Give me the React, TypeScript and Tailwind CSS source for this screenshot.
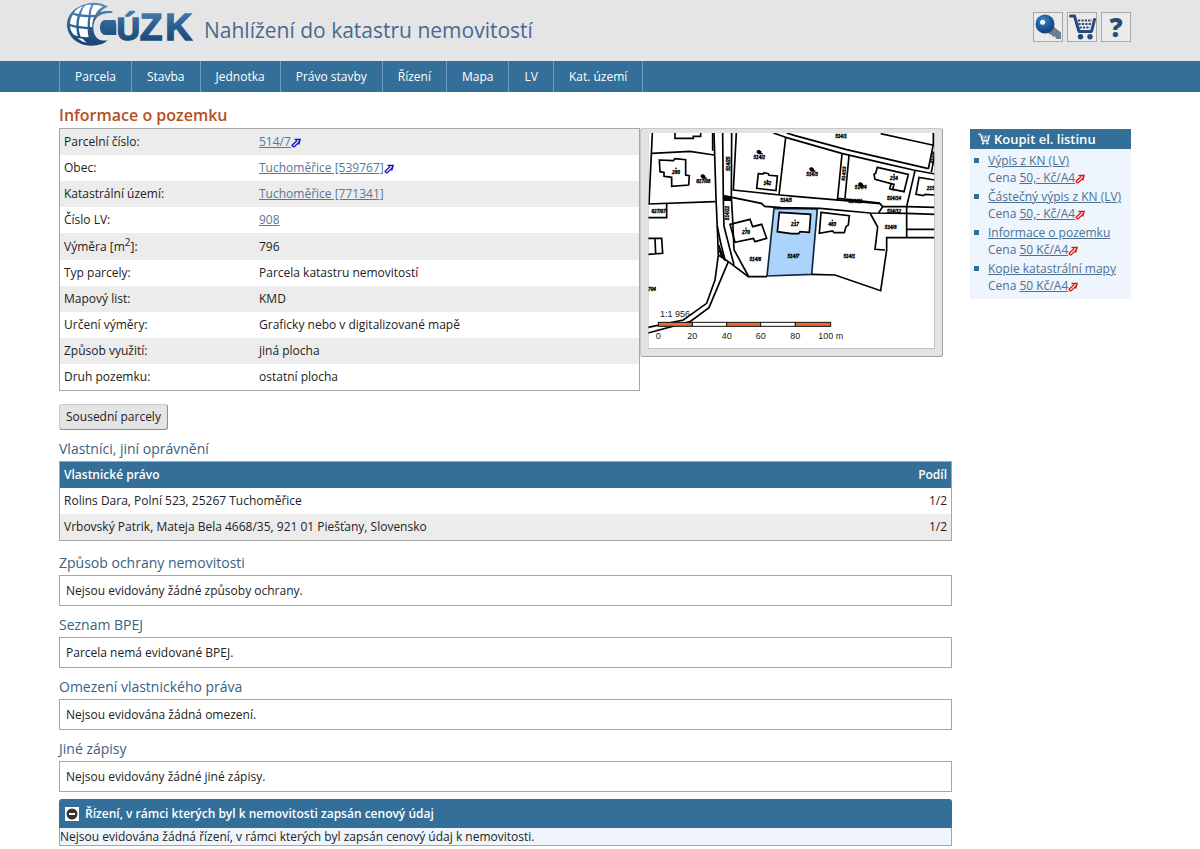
import React from "react";

type Row = { label: React.ReactNode; value: string; link?: boolean; external?: boolean };

const navItems = ["Parcela", "Stavba", "Jednotka", "Právo stavby", "Řízení", "Mapa", "LV", "Kat. území"];

const parcelRows: Row[] = [
  { label: "Parcelní číslo:", value: "514/7", link: true, external: true },
  { label: "Obec:", value: "Tuchoměřice [539767]", link: true, external: true },
  { label: "Katastrální území:", value: "Tuchoměřice [771341]", link: true },
  { label: "Číslo LV:", value: "908", link: true },
  { label: <>Výměra [m<sup className="text-[10px]">2</sup>]:</>, value: "796" },
  { label: "Typ parcely:", value: "Parcela katastru nemovitostí" },
  { label: "Mapový list:", value: "KMD" },
  { label: "Určení výměry:", value: "Graficky nebo v digitalizované mapě" },
  { label: "Způsob využití:", value: "jiná plocha" },
  { label: "Druh pozemku:", value: "ostatní plocha" },
];

const owners = [
  { name: "Rolins Dara, Polní 523, 25267 Tuchoměřice", share: "1/2" },
  { name: "Vrbovský Patrik, Mateja Bela 4668/35, 921 01 Piešťany, Slovensko", share: "1/2" },
];

const sections = [
  { title: "Způsob ochrany nemovitosti", text: "Nejsou evidovány žádné způsoby ochrany." },
  { title: "Seznam BPEJ", text: "Parcela nemá evidované BPEJ." },
  { title: "Omezení vlastnického práva", text: "Nejsou evidována žádná omezení." },
  { title: "Jiné zápisy", text: "Nejsou evidovány žádné jiné zápisy." },
];

const documents = [
  { name: "Výpis z KN (LV)", price: "50,- Kč/A4" },
  { name: "Částečný výpis z KN (LV)", price: "50,- Kč/A4" },
  { name: "Informace o pozemku", price: "50 Kč/A4" },
  { name: "Kopie katastrální mapy", price: "50 Kč/A4" },
];

function ExternalArrow({ className }: { className: string }) {
  return (
    <svg viewBox="0 0 10 10" className={`inline-block size-[10px] align-[-2px] ${className}`} aria-hidden="true">
      <path d="M3.500 1.500H9L7.600 6.500" fill="none" stroke="currentColor" strokeWidth="1.500" />
      <path d="M.8 7.500L6.200 2.500M2.800 9L8 4.200M.6 7.300l2.300 1.900" fill="none" stroke="currentColor" strokeWidth="1.200" />
    </svg>
  );
}

function Logo() {
  return (
    <svg viewBox="0 0 390 144" className="h-12 w-[130px]" role="img" aria-label="ČÚZK">
      <defs>
        <linearGradient id="logoBlue" x1="0" y1="0" x2="0" y2="144" gradientUnits="userSpaceOnUse">
          <stop offset="0.1" stopColor="#5b8bb5" />
          <stop offset="0.5" stopColor="#2b6296" />
          <stop offset="0.9" stopColor="#1c4675" />
        </linearGradient>
      </defs>
      <path
        d="M126 20C108 8 84 5 62 11C25 20 3 44 3 73c0 36 31 64 72 64c24 0 40-6 50-16c-24 4-43-8-43-38c0-30 20-46 57-44v-5c-12-2-25-2-37 3c6-8 14-13 24-17z"
        fill="url(#logoBlue)"
      />
      <g fill="#fff">
        <path d="M51 18c-12 5-21 11-27 20l14 4c3-9 7-17 13-24z" />
        <path d="M58 16c-7 8-11 17-13 27l23 2c1-11 3-20 8-30c-7-1-12 0-18 1z" />
        <path d="M83 15c-6 9-8 19-9 30l14-1c5-11 12-19 22-24c-8-4-17-5-27-5z" />
        <path d="M21 44c-6 8-9 18-9 28l19 5c0-10 1-19 4-28z" />
        <path d="M42 50c-3 9-4 18-4 28l27 3c0-11 0-20 2-29z" />
        <path d="M74 52c-2 9-3 18-2 29l7 0c-1-11 1-21 5-30z" />
        <path d="M12 79c1 10 5 19 12 26l12 4c-3-8-4-16-5-25z" />
        <path d="M38 85c1 9 3 18 6 25l24 2c-2-8-3-16-3-24z" />
        <path d="M34 114c8 7 17 12 28 14c-5-4-9-8-12-12z" />
      </g>
      <path d="M119 60c-11 0-17 8-17 22s6 23 17 23h32V75l-3-15z" fill="url(#logoBlue)" />
      <g fontFamily="Liberation Sans, Arial, sans-serif" fontWeight="700" fill="url(#logoBlue)" stroke="url(#logoBlue)">
        <text x="152" y="121" fontSize="96" strokeWidth="5">Ú</text>
        <text x="221" y="121" fontSize="112" strokeWidth="4">Z</text>
        <text x="298" y="121" fontSize="112" strokeWidth="4">K</text>
      </g>
    </svg>
  );
}

function CartIcon({ className }: { className: string }) {
  return (
    <svg viewBox="0 0 27 26" className={className} fill="none" stroke="currentColor" aria-hidden="true">
      <path d="M1.500 2H5.500L10 17.500H22.500L25.500 5.500" strokeWidth="3" strokeLinejoin="round" strokeLinecap="round" />
      <path d="M9 6.500h14M9.500 10h12.500M10.500 13.500h10.500" strokeWidth="2.200" strokeDasharray="2.200 1.200" />
      <circle cx="11.500" cy="22.800" r="2.700" fill="currentColor" stroke="none" />
      <circle cx="21" cy="22.800" r="2.700" fill="currentColor" stroke="none" />
    </svg>
  );
}

function KeyIcon() {
  return (
    <svg viewBox="0 0 28 28" className="size-7" aria-hidden="true">
      <defs>
        <radialGradient id="keyBlue" cx="0.4" cy="0.3" r="0.7">
          <stop offset="0" stopColor="#3b86c8" />
          <stop offset="0.6" stopColor="#1a5a9e" />
          <stop offset="1" stopColor="#123f78" />
        </radialGradient>
      </defs>
      <path d="M14 19l5.500-5.500l7.500 6V26h-4.500l-1.500-2.500h-2.500l-1-2h-2z" fill="#6d7d8c" />
      <circle cx="11" cy="11" r="9.500" fill="url(#keyBlue)" />
      <circle cx="8.600" cy="9.200" r="2.500" fill="#fff" />
    </svg>
  );
}

function ToolButton({ label, children }: { label: string; children: React.ReactNode }) {
  return (
    <button
      type="button"
      aria-label={label}
      className="flex size-[30px] items-center justify-center border border-[#a9a9a9] bg-[#ebebeb] text-[26px] leading-7 font-extrabold text-[#274a78]"
    >
      {children}
    </button>
  );
}

const mapLabels: [number, number, string][] = [
  [84, 122, "280"], [166, 150, "627/06"], [32, 241, "627/07"], [334, 78, "514/2"], [358, 157, "142"],
  [414, 207, "514/5"], [579, 14, "514/1"], [492, 130, "514/3"], [638, 167, "514/4"], [738, 141, "214"],
  [848, 170, "215"], [738, 201, "514/14"], [738, 239, "514/12"], [728, 288, "514/8"], [441, 278, "217"],
  [553, 278, "463"], [294, 304, "270"], [322, 383, "514/6"], [436, 374, "514/7"], [604, 374, "514/1"],
  [12, 475, "704"], [622, 211, "514/11"],
];

// Scale bar stops, in viewBox units
const scaleStops: [number, string][] = [
  [31, "0"], [133, "20"], [236, "40"], [338, "60"], [442, "80"], [548, "100 m"],
];

function ParcelMap() {
  return (
    <svg viewBox="0 0 861 648" className="block w-full bg-white" role="img" aria-label="Mapa parcely">
      <path d="M378 226L508 228L491 424L357 429z" fill="#abd3fc" stroke="#12263c" strokeWidth="5" />
      <g fill="none" stroke="#000" strokeWidth="5">
        {/* roads */}
        <path d="M198 0L204 196L208 285L211 366L201 441L176 511L106 561L0 583" />
        <path d="M241 386L183 524L126 566L0 600" />
        <path d="M224 0L226 201L228 280L258 396M208 280L218 330L232 384M251 0L250 190L254 260L258 350L301 429" />
        <path d="M211 366L241 386L301 431H357M212 336l16 44M214 350l8 22" />
        <path d="M265 0L256 171L396 186L441 190L696 212L704 221H776L861 223" />
        <path d="M226 188L340 211L350 220L400 224L516 226L666 240L776 241L861 244" />
        <path d="M376 0L413 13L426 17L581 61L696 88L796 111L861 123M416 0L441 8L596 50L841 107" />
        <path d="M698 2L853 36M856 0V34L841 108M861 60L850 118M582 63L568 204M603 68L591 195M570 196L696 210M704 221l-12 18" />
        {/* parcel boundaries */}
        <path d="M13 0L3 213M12 61L126 55L198 66M194 0V53M0 213L202 206M413 14L393 186" />
        <path d="M801 113L776 221V312M776 289H861M861 314H716V351L698 473L561 426L491 424M666 240L689 282L681 349L711 351" />
        {/* buildings */}
        <path d="M81 0V16H136V10H158V0M0 254H56V213M0 316H41L44 361L0 364M21 316L23 362" />
        <path d="M34 81L76 83L81 77L113 80V126L124 128L122 156L71 160V133L48 130V118L36 116z" />
        <path d="M331 122L346 123L348 119L361 122L363 127L388 129L384 173L326 166z" />
        <path d="M688 103L781 124L768 176L734 169L738 154L681 139L678 124L683 121zM729 153l-4 14l12 4" />
        <path d="M861 141L813 133L804 184L826 188L831 184L861 186" />
        <path d="M519 238L604 248L601 276L594 281L589 299H558L554 294L514 301z" />
        <path d="M246 274L306 259L314 281L341 274L356 316L321 326L316 316L261 328z" />
        <path d="M394 238L488 244L484 298L456 296L452 302H430L388 296z" fill="#fff" />
      </g>
      <path d="M226 188l26 2v14h-26z" />
      <g fontFamily="Liberation Sans, Arial, sans-serif" textAnchor="middle">
        <g fontSize="14" fontWeight="700" fontStyle="italic" stroke="#000" strokeWidth="1">
          {mapLabels.map(([x, y, text]) => (
            <text key={`${x}-${y}`} x={x} y={y}>{text}</text>
          ))}
          <text transform="translate(245 92) rotate(-90)">514/25</text>
          <text transform="translate(243 240) rotate(-90)">514/22</text>
          <text transform="translate(592 122) rotate(-86)">514/13</text>
          <text transform="translate(860 74) rotate(-84)">514/9</text>
        </g>
        <g>
          {[[333, 58], [165, 131], [491, 110], [638, 155]].map(([x, y]) => (
            <path key={x} d={`M${x - 7} ${y - 5}l7-3l7 5v5h4v4h-12l-6-5z`} />
          ))}
          {[[84, 106], [358, 143], [294, 286], [441, 262], [553, 262], [738, 125]].map(([x, y]) => (
            <circle key={x} cx={x} cy={y} r="2.500" />
          ))}
        </g>
        <text x="36" y="551" fontSize="27" textAnchor="start" fill="#222">1:1 956</text>
        {scaleStops.map(([x, text], i) => (
          <g key={text}>
            {i < scaleStops.length - 1 && (
              <rect
                x={x}
                y="568"
                width={scaleStops[i + 1][0] - x}
                height="12"
                fill={i % 2 === 0 ? "#f26a2c" : "#fff"}
                stroke="#111"
                strokeWidth="3"
              />
            )}
            <text x={x} y="618" fontSize="27" fill="#222">{text}</text>
          </g>
        ))}
      </g>
      <path d="M0 0V647H860V0" fill="none" stroke="#b8b8b8" strokeWidth="3" />
    </svg>
  );
}

function Header() {
  return (
    <header className="bg-[#e5e5e5]">
      <div className="flex h-[61px] items-start justify-between pr-[69px] pl-[66px]">
        <div className="flex items-start gap-2">
          <Logo />
          <div className="pt-4 text-[21px] leading-7 text-[#456a92]">Nahlížení do katastru nemovitostí</div>
        </div>
        <div className="flex gap-1 pt-3">
          <ToolButton label="Přihlášení"><KeyIcon /></ToolButton>
          <ToolButton label="Košík"><CartIcon className="h-[26px] w-[27px]" /></ToolButton>
          <ToolButton label="Nápověda">?</ToolButton>
        </div>
      </div>
      <nav className="flex h-[31px] bg-[#336f99] px-[59px] text-[12px] text-white">
        {navItems.map((item) => (
          <a
            key={item}
            href="#"
            className="flex items-center border-l border-[#6f9cbc] px-[15px] last:border-r"
          >
            {item}
          </a>
        ))}
      </nav>
    </header>
  );
}

function ParcelTable() {
  return (
    <table className="min-w-0 flex-1 border-separate border-spacing-0 border border-[#a6a6a6]">
      <tbody>
        {parcelRows.map((row, i) => (
          <tr key={i} className="h-[26px] odd:bg-[#ececec] nth-5:h-[27px]">
            <th scope="row" className="w-[195px] px-1 text-left font-normal">{row.label}</th>
            <td className="px-1">
              {row.link ? (
                <a href="#" className="text-[#55799b] underline">
                  {row.value}
                  {row.external && <ExternalArrow className="text-[#1010c8]" />}
                </a>
              ) : (
                row.value
              )}
            </td>
          </tr>
        ))}
      </tbody>
    </table>
  );
}

function Sidebar() {
  return (
    <aside className="mt-[37px] w-[161px] shrink-0 self-start bg-[#eef5fd] text-[#4f7190]">
      <h2 className="flex h-5 items-center gap-1 bg-[#336f99] px-2 text-[13px] font-semibold text-white">
        <CartIcon className="size-3" />
        Koupit el. listinu
      </h2>
      <ul className="flex flex-col gap-0.5 pt-[3px] pb-[5px] leading-[17px]">
        {documents.map((doc) => (
          <li key={doc.name} className="flex gap-[9px] pl-1">
            <span className="mt-1.5 size-[5px] shrink-0 bg-[#336f99]" />
            <div className="whitespace-nowrap">
              <a href="#" className="block underline">{doc.name}</a>
              Cena{" "}
              <a href="#" className="underline">
                {doc.price}
                <ExternalArrow className="text-[#e01515]" />
              </a>
            </div>
          </li>
        ))}
      </ul>
    </aside>
  );
}

function SectionTitle({ children }: { children: React.ReactNode }) {
  return <h2 className="mb-0.5 text-[14px] leading-5 font-medium text-[#3a5f85]">{children}</h2>;
}

export default function App() {
  return (
    <div className="bg-white font-['Open_Sans','Noto_Sans',sans-serif] text-[12px] leading-[18px] text-[#222]">
      <Header />
      <div className="flex gap-[18px] pr-[69px] pl-[59px]">
        <main className="min-w-0 flex-1 pt-[11px]">
          <h1 className="mb-px text-[16px] leading-6 font-semibold text-[#b5501f]">Informace o pozemku</h1>
          <div className="flex items-start pr-[9px]">
            <ParcelTable />
            <div className="w-[303px] shrink-0 rounded-[3px] border border-t-[#c8c8c8] border-r-[#a0a0a0] border-b-[#a0a0a0] border-l-[#c8c8c8] bg-[#e3e3e3] px-[7px] pt-1 pb-[7px]">
              <ParcelMap />
            </div>
          </div>
          <button
            type="button"
            className="mt-[13px] mb-[9px] block h-[26px] rounded-[3px] border border-t-[#c8c8c8] border-r-[#8c8c8c] border-b-[#8c8c8c] border-l-[#c8c8c8] bg-[#e4e4e4] px-1.5"
          >
            Sousední parcely
          </button>

          <SectionTitle>Vlastníci, jiní oprávnění</SectionTitle>
          <table className="w-full border-separate border-spacing-0 border border-[#a6a6a6]">
            <thead>
              <tr className="h-[26px] bg-[#336f99] text-white">
                <th className="px-1 text-left font-semibold">Vlastnické právo</th>
                <th className="px-1 text-right font-semibold">Podíl</th>
              </tr>
            </thead>
            <tbody>
              {owners.map((owner) => (
                <tr key={owner.name} className="h-[26px] even:bg-[#ececec]">
                  <td className="px-1">{owner.name}</td>
                  <td className="px-1 text-right">{owner.share}</td>
                </tr>
              ))}
            </tbody>
          </table>

          <div className="flex flex-col gap-[9px] pt-3">
            {sections.map((section) => (
              <section key={section.title}>
                <SectionTitle>{section.title}</SectionTitle>
                <p className="border border-[#a6a6a6] px-1.5 py-1.5 leading-[17px]">{section.text}</p>
              </section>
            ))}
          </div>

          <section className="mt-[7px]">
            <h2 className="flex h-[29px] items-center gap-1.5 rounded-t-[3px] bg-[#336f99] px-1.5 font-semibold text-white">
              <button type="button" aria-label="Sbalit" className="flex size-[14px] items-center justify-center bg-white">
                <svg viewBox="0 0 12 12" className="size-3" aria-hidden="true">
                  <circle cx="6" cy="6" r="5.500" fill="#333" />
                  <rect x="3" y="5" width="6" height="2" fill="#fff" />
                </svg>
              </button>
              Řízení, v rámci kterých byl k nemovitosti zapsán cenový údaj
            </h2>
            <p className="border border-t-0 border-[#a6a6a6] bg-[#eef5fd] leading-[17px]">
              Nejsou evidována žádná řízení, v rámci kterých byl zapsán cenový údaj k nemovitosti.
            </p>
          </section>
        </main>
        <Sidebar />
      </div>
    </div>
  );
}
